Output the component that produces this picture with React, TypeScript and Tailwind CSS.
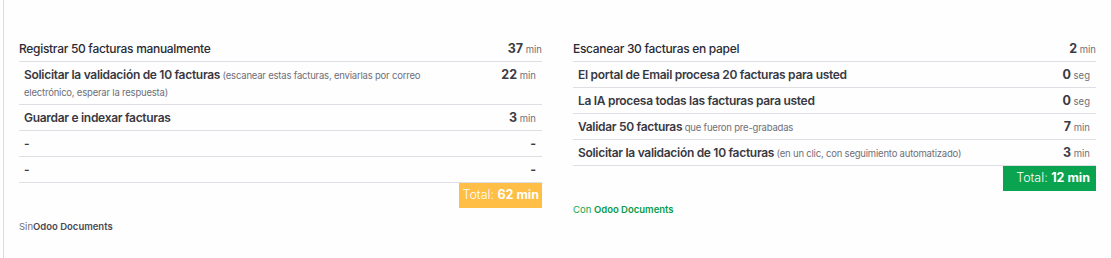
const sin = [
  { title: 'Registrar 50 facturas manualmente', value: '37', unit: 'min', head: true },
  {
    title: 'Solicitar la validación de 10 facturas',
    note: '(escanear estas facturas, enviarlas por correo electrónico, esperar la respuesta)',
    value: '22',
    unit: 'min',
  },
  { title: 'Guardar e indexar facturas', value: '3', unit: 'min' },
  { title: '-', value: '-', unit: '' },
  { title: '-', value: '-', unit: '' },
];

const con = [
  { title: 'Escanear 30 facturas en papel', value: '2', unit: 'min', head: true },
  { title: 'El portal de Email procesa 20 facturas para usted', value: '0', unit: 'seg' },
  { title: 'La IA procesa todas las facturas para usted', value: '0', unit: 'seg' },
  { title: 'Validar 50 facturas', note: 'que fueron pre-grabadas', value: '7', unit: 'min' },
  {
    title: 'Solicitar la validación de 10 facturas',
    note: '(en un clic, con seguimiento automatizado)',
    value: '3',
    unit: 'min',
  },
];

type Row = { title: string; note?: string; value: string; unit: string; head?: boolean };

function Rows({ rows }: { rows: Row[] }) {
  return (
    <div>
      {rows.map((r, i) => (
        <div
          key={i}
          className={
            'flex items-start border-b border-[#dedee4] py-[4px] text-[12px] leading-[17px] ' +
            (r.head ? 'pl-0 pr-0' : 'pl-[5px] pr-[6px]')
          }
        >
          <div className="flex-1 pr-[70px]">
            <span
              className={
                r.head
                  ? 'font-medium text-[#2a2a34] tracking-[-0.3px]'
                  : 'font-semibold text-[#393943] tracking-[-0.3px]'
              }
            >
              {r.title}
            </span>
            {r.note && (
              <span className="text-[9.5px] leading-[12px] text-[#6f6f78] tracking-[-0.2px]"> {r.note}</span>
            )}
          </div>
          <div className="shrink-0 text-right whitespace-nowrap">
            <span className="text-[12.5px] leading-[12px] font-bold text-[#3a3a44]">{r.value}</span>
            {r.unit && <span className="text-[9.5px] leading-[12px] text-[#6f6f78]"> {r.unit}</span>}
          </div>
        </div>
      ))}
    </div>
  );
}

export default function App() {
  return (
    <div className="w-[1111px] h-[258px] bg-[#fefefe] pl-[3px]" style={{ fontFamily: 'Inter, "Noto Sans", sans-serif' }}>
      <div className="h-full border-l border-[#dcdcdc] pl-[15px] pr-[15px] pt-[36px] grid grid-cols-2 gap-[31px] items-start">
        {/* Sin Odoo */}
        <div>
          <Rows rows={sin} />
          <div className="flex justify-end">
            <div className="w-[83px] h-[25px] bg-[#ffbe45] text-white text-[12.5px] whitespace-nowrap flex items-center justify-end pr-[3px]">
              <span className="font-light">Total:&nbsp;</span>
              <span className="font-bold">62 min</span>
            </div>
          </div>
          <p className="mt-[13px] text-[9.5px] leading-[12px] text-[#6f6f78]">
            Sin<span className="font-semibold text-[#4a4a54]">Odoo Documents</span>
          </p>
        </div>

        {/* Con Odoo */}
        <div>
          <Rows rows={con} />
          <div className="flex justify-end">
            <div className="w-[93px] h-[25px] bg-[#0aa350] text-white text-[12.5px] whitespace-nowrap flex items-center justify-end pr-[6px]">
              <span className="font-light">Total:&nbsp;</span>
              <span className="font-bold">12 min</span>
            </div>
          </div>
          <p className="mt-[13px] text-[9.5px] leading-[12px] text-[#16a34a]">
            Con <span className="font-semibold text-[#0b9a48]">Odoo Documents</span>
          </p>
        </div>
      </div>
    </div>
  );
}
